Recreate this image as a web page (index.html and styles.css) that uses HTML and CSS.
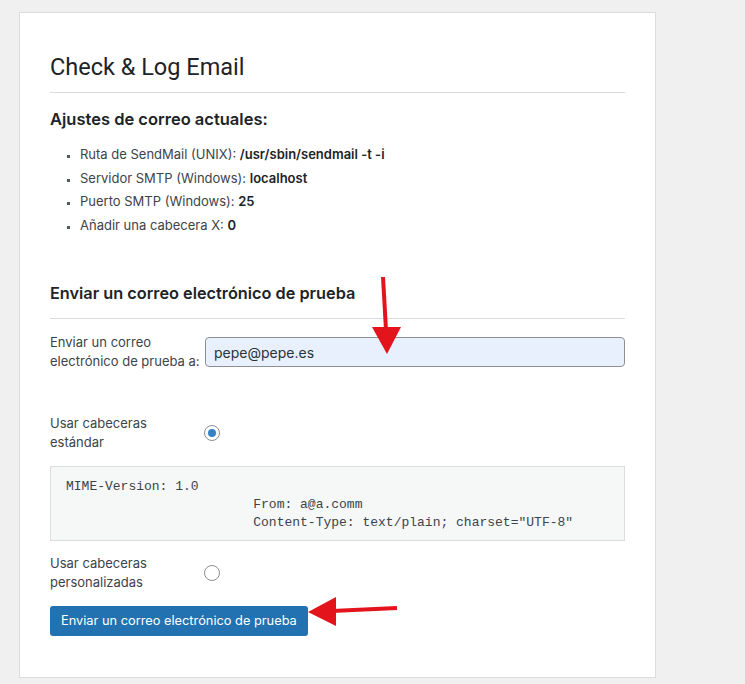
FILE: index.html
```html
<!DOCTYPE html>
<html lang="es">
<head>
    <meta charset="UTF-8">
    <meta name="viewport" content="width=device-width, initial-scale=1.0">
    <title>Check &amp; Log Email</title>
    <link rel="stylesheet" href="styles.css">
</head>
<body>
    <div class="card">
        <h1>Check &amp; Log Email</h1>

        <h2 class="settings-title">Ajustes de correo actuales:</h2>
        <ul class="settings-list">
            <li>Ruta de SendMail (UNIX): <strong>/usr/sbin/sendmail -t -i</strong></li>
            <li>Servidor SMTP (Windows): <strong>localhost</strong></li>
            <li>Puerto SMTP (Windows): <strong>25</strong></li>
            <li>Añadir una cabecera X: <strong>0</strong></li>
        </ul>

        <h2 class="section-title">Enviar un correo electrónico de prueba</h2>

        <div class="form-row">
            <label for="send-to">Enviar un correo electrónico de prueba a:</label>
            <input type="email" id="send-to" class="email-input" value="pepe@pepe.es">
        </div>

        <div class="form-row radio-row std-row">
            <label for="std-headers">Usar cabeceras estándar</label>
            <input type="radio" id="std-headers" name="headers" class="radio" checked>
        </div>

        <pre class="headers-box">MIME-Version: 1.0
                        From: a@a.comm
                        Content-Type: text/plain; charset="UTF-8"</pre>

        <div class="form-row radio-row">
            <label for="custom-headers">Usar cabeceras personalizadas</label>
            <input type="radio" id="custom-headers" name="headers" class="radio">
        </div>

        <button class="send-btn">Enviar un correo electrónico de prueba</button>
    </div>

    <!-- annotation arrows drawn over the screenshot -->
    <svg class="arrows" width="745" height="684" viewBox="0 0 745 684">
        <line x1="383" y1="277" x2="386" y2="330" stroke="#e3141b" stroke-width="4" />
        <polygon points="372,327 401,327 387,354" fill="#e3141b" />
        <line x1="397" y1="608" x2="332" y2="611" stroke="#e3141b" stroke-width="4" />
        <polygon points="308,612 336,597 336,626" fill="#e3141b" />
    </svg>
</body>
</html>
```

FILE: styles.css
```css
:root {
    --text-color: #1d2327;
    --muted-text: #3c434a;
    --border-color: #dcdcde;
    --blue: #2271b1;
    --background-color: #f0f0f1;
}

* {
    margin: 0;
    padding: 0;
    box-sizing: border-box;
}

body {
    position: relative;
    font-family: 'Inter', 'Liberation Sans', sans-serif;
    font-size: 13px;
    color: var(--text-color);
    background-color: var(--background-color);
    min-height: 684px;
    padding: 12px 0 0 19px;
}

.card {
    width: 637px;
    background-color: white;
    border: 1px solid var(--border-color);
    padding: 39px 30px 41px 30px;
}

h1 {
    font-family: 'Roboto', 'Liberation Sans', sans-serif;
    font-size: 23.5px;
    font-weight: 400;
    line-height: 30px;
    padding-bottom: 10px;
    border-bottom: 1px solid var(--border-color);
}

.settings-title {
    font-size: 16.5px;
    font-weight: 600;
    line-height: 24px;
    margin-top: 14px;
}

.settings-list {
    list-style: square;
    padding-left: 30px;
    margin-top: 12px;
    color: var(--muted-text);
}

.settings-list li {
    line-height: 23.5px;
}

.settings-list li::marker {
    color: #50575e;
    font-size: 10px;
}

.settings-list strong {
    color: var(--text-color);
    font-weight: 600;
}

.section-title {
    font-size: 16.3px;
    font-weight: 600;
    line-height: 24px;
    margin-top: 44px;
    padding-bottom: 13px;
    border-bottom: 1px solid var(--border-color);
}

.form-row {
    display: flex;
    align-items: center;
    margin-top: 14px;
}

.form-row label {
    width: 155px;
    flex-shrink: 0;
    line-height: 19px;
    color: var(--muted-text);
}

.email-input {
    flex: 1;
    height: 30px;
    padding: 0 8px;
    font-family: inherit;
    font-size: 14px;
    color: #2c3338;
    background-color: #e8f0fe;
    border: 1px solid #8c8f94;
    border-radius: 4px;
}

.radio-row {
    margin-top: 13.5px;
}

.radio-row label {
    padding-right: 20px;
}

.std-row {
    margin-top: 43px;
}

.radio {
    appearance: none;
    width: 16px;
    height: 16px;
    margin-left: -1px;
    border: 1px solid #8c8f94;
    border-radius: 50%;
    background: white;
    display: flex;
    align-items: center;
    justify-content: center;
}

.radio:checked::before {
    content: '';
    width: 8px;
    height: 8px;
    border-radius: 50%;
    background-color: #3582c4;
}

.headers-box {
    margin-top: 13.5px;
    padding: 11px 15px 8px;
    font-family: 'Liberation Mono', monospace;
    font-size: 13px;
    line-height: 18px;
    color: var(--muted-text);
    background-color: #f6f7f7;
    border: 1px solid var(--border-color);
}

.send-btn {
    display: block;
    margin-top: 13.5px;
    height: 30px;
    padding: 0 11px;
    font-family: inherit;
    font-size: 12.8px;
    color: white;
    background-color: var(--blue);
    border: none;
    border-radius: 3px;
    cursor: pointer;
}

.arrows {
    position: absolute;
    top: 0;
    left: 0;
    pointer-events: none;
}
```
